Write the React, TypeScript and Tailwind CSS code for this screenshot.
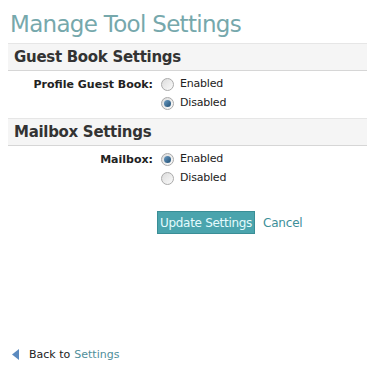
import React from 'react';

const font = { fontFamily: 'Tahoma, "DejaVu Sans", Verdana, sans-serif' };

function Radio({ checked, label }: { checked?: boolean; label: string }) {
  return (
    <div className="flex items-center h-[19px]">
      <span className="relative flex items-center justify-center w-[13px] h-[13px] rounded-full border border-[#aaaaaa] bg-gradient-to-br from-[#dcdcdc] to-[#fbfbfb]">
        {checked && (
          <span className="w-[7px] h-[7px] rounded-full bg-gradient-to-br from-[#6c9dc4] to-[#1f4e73]" />
        )}
      </span>
      <span className="ml-[6px] text-[11px] tracking-[-0.2px] text-[#222]">{label}</span>
    </div>
  );
}

function Section({ title, label, value }: { title: string; label: string; value: 'on' | 'off' }) {
  return (
    <div>
      <div className="ml-[8px] h-[28px] flex items-center pl-[6px] bg-[#f5f5f5] border-t border-b border-t-[#e6e6e6] border-b-[#d6d6d6]">
        <h2 className="text-[15px] tracking-[-0.3px] font-bold text-[#333] leading-none">{title}</h2>
      </div>
      <div className="flex pt-[4px] pb-[5px]">
        <div className="w-[153px] text-right text-[11px] font-bold text-[#222] h-[19px] leading-[19px]">{label}</div>
        <div className="ml-[8px]">
          <Radio label="Enabled" checked={value === 'on'} />
          <Radio label="Disabled" checked={value === 'off'} />
        </div>
      </div>
    </div>
  );
}

export default function App() {
  return (
    <div className="w-[367px] h-[387px] bg-white flex flex-col" style={font}>
      <h1 className="pl-[10px] pt-[10px] h-[43px] text-[23px] tracking-[-0.7px] leading-[28px] text-[#76a8ac]">Manage Tool Settings</h1>
      <Section title="Guest Book Settings" label="Profile Guest Book:" value="off" />
      <Section title="Mailbox Settings" label="Mailbox:" value="on" />
      <div className="flex items-center pl-[157px] mt-[18px]">
        <button className="h-[23px] w-[98px] bg-[#4aa4ad] border border-[#3a8e96] text-[12px] tracking-[-0.3px] text-[#e4fbfd] whitespace-nowrap">
          Update Settings
        </button>
        <a className="ml-[8px] text-[12px] tracking-[-0.2px] text-[#3d8f99]">Cancel</a>
      </div>
      <div className="mt-auto mb-[24px] flex items-center pl-[12px] text-[11px]">
        <svg width="7" height="11" viewBox="0 0 7 11">
          <polygon points="7,0 7,11 0,5.5" fill="#5b8abf" />
        </svg>
        <span className="ml-[10px] text-[#222]">Back to</span>
        <a className="ml-[4px] text-[#4f8e9a]">Settings</a>
      </div>
    </div>
  );
}
